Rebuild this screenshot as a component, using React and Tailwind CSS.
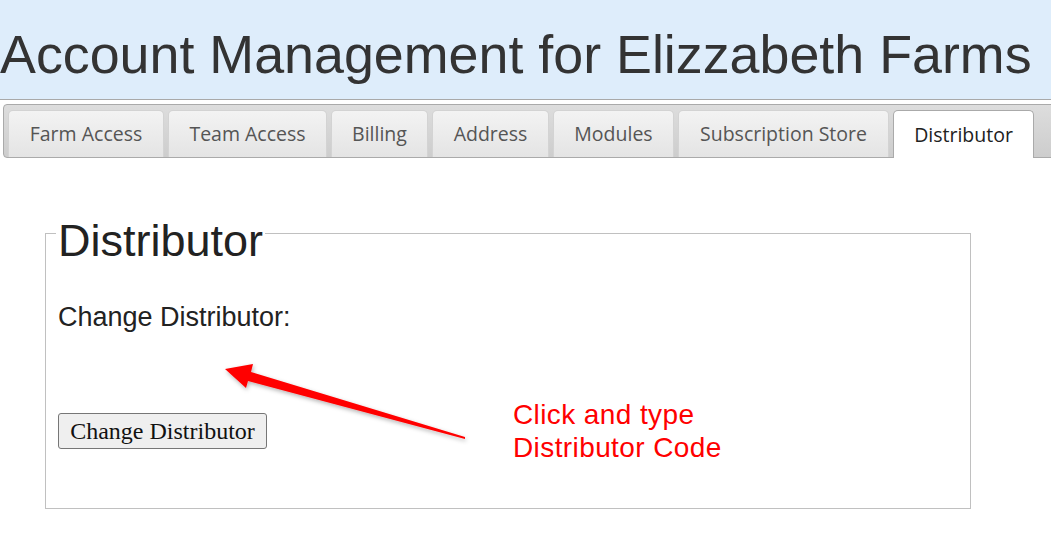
import React from "react";

const tabs = [
  { label: "Farm Access", w: "w-[156px]" },
  { label: "Team Access", w: "w-[159px]" },
  { label: "Billing", w: "w-[97px]" },
  { label: "Address", w: "w-[117px]" },
  { label: "Modules", w: "w-[121px]" },
  { label: "Subscription Store", w: "w-[211px]" },
  { label: "Distributor", w: "w-[141px]", active: true },
];

const App = () => {
  return (
    <div className="relative w-[1051px] min-h-[537px] overflow-hidden bg-white font-['Liberation_Sans',Arial,sans-serif]">
      <header className="h-[100px] bg-[#deedfb] border-b border-[#a9a9a9] pt-[23px]">
        <h1 className="text-[53.8px] leading-[62px] text-[#333] whitespace-nowrap">
          Account Management for Elizzabeth Farms
        </h1>
      </header>

      <nav className="mt-[4px] ml-[3px] w-[1070px] h-[54px] border border-[#aaa] rounded-[4px] bg-gradient-to-b from-[#dddddd] to-[#cdcdcd] pt-[5px] pl-[4px] flex gap-[4px] items-start">
        {tabs.map((tab) =>
          tab.active ? (
            <div
              key={tab.label}
              className={`${tab.w} h-[48px] rounded-t-[5px] border border-b-0 border-[#aaa] bg-white flex items-center justify-center text-[19.5px] text-[#212121] font-['Open_Sans',sans-serif]`}
            >
              {tab.label}
            </div>
          ) : (
            <div
              key={tab.label}
              className={`${tab.w} h-[47px] rounded-t-[5px] border border-b-0 border-[#d3d3d3] bg-gradient-to-b from-[#f3f3f3] to-[#e4e4e4] flex items-center justify-center text-[19.5px] text-[#555] font-['Open_Sans',sans-serif]`}
            >
              {tab.label}
            </div>
          )
        )}
      </nav>

      <fieldset className="mt-[42px] ml-[45px] w-[926px] border border-[#c0c0c0] pl-[12px] pb-[59px]">
        <legend className="text-[45px] leading-[52px] text-[#222] pt-[15px] px-[2px] -ml-[2px]">
          Distributor
        </legend>
        <p className="mt-[35px] text-[27px] leading-[30px] text-[#222]">
          Change Distributor:
        </p>
        <button className="mt-[81px] w-[209px] h-[36px] bg-[#efefef] border border-[#767676] rounded-[3px] text-[24px] text-[#111] font-['Liberation_Serif','Times_New_Roman',serif] flex items-center justify-center">
          Change Distributor
        </button>
      </fieldset>

      <svg
        className="absolute left-0 top-0 pointer-events-none"
        width="1051"
        height="537"
        viewBox="0 0 1051 537"
      >
        <defs>
          <filter id="shadow" x="-10%" y="-30%" width="120%" height="160%">
            <feDropShadow dx="1" dy="2" stdDeviation="2" floodColor="#000" floodOpacity="0.3" />
          </filter>
        </defs>
        <polygon
          filter="url(#shadow)"
          fill="#ff0000"
          points="225,369 253,364 251,372 465,437 465,439 248,381 246,388"
        />
      </svg>

      <div className="absolute left-[513px] top-[398px] text-[28px] leading-[33px] text-[#ff0000] tracking-[0.4px]">
        <p>Click and type</p>
        <p>Distributor Code</p>
      </div>
    </div>
  );
};

export default App;
